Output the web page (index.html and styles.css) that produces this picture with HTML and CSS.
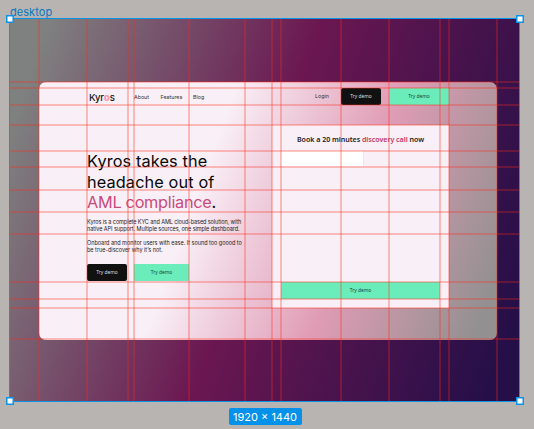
FILE: index.html
```html
<!DOCTYPE html>
<html lang="en">
<head>
<meta charset="utf-8">
<title>desktop</title>
<link rel="stylesheet" href="styles.css">
</head>
<body>
<div class="canvas">
  <div class="frame-label">desktop</div>
  <div class="frame">
    <main class="page">
      <nav class="nav">
        <div class="logo">Kyr<span class="logo-o">o</span>s</div>
        <a class="link about">About</a>
        <a class="link features">Features</a>
        <a class="link blog">Blog</a>
        <a class="link login">Login</a>
        <a class="btn dark">Try demo</a>
        <a class="btn green wide">Try demo</a>
      </nav>
      <div class="content">
        <section class="hero">
          <h1><span class="h-one">Kyros takes the</span><br><span class="h-two">headache out of</span><br><span class="h-three"><em>AML compliance</em>.</span></h1>
          <p><span class="p-one">Kyros is a complete KYC and AML cloud-based solution, with</span><br><span class="p-two">native API support. Multiple sources, one simple dashboard.</span></p>
          <p><span class="p-three">Onboard and monitor users with ease. It sound too goood to</span><br><span class="p-four">be true-discover why it’s not.</span></p>
          <div class="actions">
            <a class="btn dark">Try demo</a>
            <a class="btn green">Try demo</a>
          </div>
        </section>
        <section class="booking">
          <h2>Book a 20 minutes <em>discovery call</em> now</h2>
          <div class="field"></div>
          <a class="btn green submit">Try demo</a>
        </section>
      </div>
    </main>
    <svg class="guides" width="511" height="384" viewBox="9 18 511 384">
      <path d="M39 19V401M87 19V401M128 19V401M134 19V401M189 19V401M245 19V401M272 19V401M281 19V401M341 19V401M389 19V401M440 19V401M449 19V401M497 19V401"/>
      <path d="M10 82H520M10 88H520M10 105H520M10 125H520M10 151H520M10 167H520M10 190H520M10 212H520M10 234H520M10 282H520M10 299H520M10 308H520M10 339H520"/>
    </svg>
    <i class="handle tl"></i><i class="handle tr"></i><i class="handle bl"></i><i class="handle br"></i>
  </div>
  <div class="size">1920 × 1440</div>
</div>
</body>
</html>
```

FILE: styles.css
```css
* { box-sizing: border-box; }
body { margin: 0; background: #b8b4b2; }
.canvas {
  width: 534px; height: 429px; overflow: hidden;
  display: flex; flex-direction: column;
  font-family: "Noto Sans", sans-serif;
}
.frame-label {
  height: 18px; padding: 5px 0 0 10px;
  font: 11px/14px Inter, sans-serif; letter-spacing: .05px; color: #0878bf;
}
.frame {
  position: relative; flex: none;
  width: 511px; height: 384px; margin-left: 9px; padding: 64px 0 0 30px;
  background: linear-gradient(109deg, #7f8180 6%, #6b1751 48.5%, #250f48 95%);
}
.page {
  width: 458px; height: 258px; padding: 6px 48px 0; border-radius: 7px;
  background: linear-gradient(110deg, #f9eff6 36%, #e09cb5 66%, #929090 96%);
}
.nav { display: flex; align-items: center; height: 17px; }
.logo { width: 47px; padding: 1px 0 0 2px; font: 500 9.6px/17px Inter, sans-serif; letter-spacing: -.2px; color: #181818; }
.logo-o { color: #f79bb8; font-weight: 900; }
.link { font: 5.3px/17px Inter, sans-serif; color: #333; white-space: nowrap; padding-top: 2px; }
.about { width: 26.5px; }
.features { width: 32.5px; }
.blog { width: 122px; }
.login { width: 26px; padding-top: 0; }
.btn {
  display: flex; align-items: center; justify-content: center; flex: none;
  width: 40px; height: 17px; border-radius: 2px;
  font-size: 4.9px; line-height: 7px; white-space: nowrap; color: #16483a;
}
.dark { background: #111; color: #ddd; }
.green { width: 55px; background: #6aedba; border-radius: 1px; }
.wide { width: 60px; margin-left: 8px; }
.content { display: flex; justify-content: space-between; padding-top: 20px; }
.hero { width: 170px; padding-top: 26px; white-space: nowrap; }
h1 { margin: 0 0 6px; font: 400 16.3px/20.5px Inter, sans-serif; color: #080808; }
.h-one, .h-two { letter-spacing: .12px; }
.h-three { letter-spacing: -.28px; }
em { font-style: normal; color: #c43768; }
h1 em { color: #c84b7c; }
p { margin: 0 0 7px; font: 5.5px/7px Inter, sans-serif; color: #222; }
.p-one { letter-spacing: -.08px; }
.p-two { letter-spacing: -.06px; }
.p-three { letter-spacing: -.025px; }
.actions { display: flex; gap: 7px; padding-top: 3px; }
.booking { width: 177px; height: 183px; padding: 8px 9px 9px; background: #f9eff6; display: flex; flex-direction: column; }
h2 { margin: 0; height: 18px; font-size: 7.1px; font-weight: 600; line-height: 12px; letter-spacing: -.04px; text-align: center; white-space: nowrap; color: #222; }
.field { width: 83px; height: 15px; background: #fff; border-right: 1px solid #eee6ec; }
.submit { width: 159px; margin-top: auto; }
.guides { position: absolute; left: 0; top: 0; fill: none; stroke: #ff2a18; stroke-width: 2; stroke-opacity: .27; }
.frame::after { content: ""; position: absolute; inset: 0; border: 1px solid #0d94e6; }
.handle { position: absolute; z-index: 1; width: 8px; height: 8px; background: #fff; border: 1px solid #0d94e6; box-shadow: inset 0 0 0 .5px #0d94e6; }
.tl { left: -3px; top: -3px; }
.tr { right: -4px; top: -3px; }
.bl { left: -3px; bottom: -3px; }
.br { right: -4px; bottom: -3px; }
.size {
  width: 73px; height: 17px; margin: 6px 0 0 228.5px; border-radius: 2px;
  background: #0491e9; color: #fff; text-align: center; white-space: nowrap;
  font: 11px/18px Inter, sans-serif;
}
```
